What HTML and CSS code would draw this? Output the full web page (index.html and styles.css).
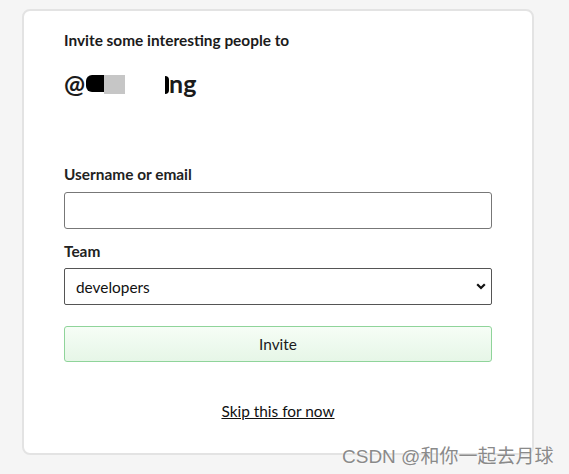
FILE: index.html
```html
<!DOCTYPE html>
<html>
<head>
<meta charset="utf-8">
<link rel="stylesheet" href="styles.css">
</head>
<body>
<div class="page">
  <div class="card">
    <h1 class="title">Invite some interesting people to</h1>
    <div class="handle">@<span class="redact-black"></span><span class="redact-gray"></span><span class="redact-gap"></span><span class="redact-half"></span>ng</div>
    <form class="form">
      <label class="label" for="user">Username or email</label>
      <input class="input" id="user" type="text">
      <label class="label team" for="team">Team</label>
      <div class="select">
        <span>developers</span>
        <svg class="chev" width="10" height="7" viewBox="0 0 10 7"><path d="M1.2 1.2 L5 5 L8.8 1.2" fill="none" stroke="#111" stroke-width="2.2"/></svg>
      </div>
      <button class="btn" type="button">Invite</button>
    </form>
    <div class="skip"><a href="#">Skip this for now</a></div>
  </div>
  <div class="watermark">CSDN @和你一起去月球</div>
</div>
</body>
</html>
```
FILE: styles.css
```css
html, body {
  margin: 0;
  padding: 0;
  background: #f5f5f5;
  font-family: "Lato", "Noto Sans", sans-serif;
  color: #1b1b1b;
}
.page {
  position: relative;
  width: 569px;
  height: 474px;
  padding: 9px 0 0 22px;
  box-sizing: border-box;
}
.card {
  width: 512px;
  height: 446px;
  box-sizing: border-box;
  background: #fff;
  border: 2px solid #e3e3e3;
  border-radius: 8px;
  padding: 19px 40px 0 40px;
}
.title {
  margin: 0;
  font-size: 15.4px;
  font-weight: 700;
  line-height: 20px;
}
.handle {
  margin-top: 19px;
  font-size: 25px;
  font-weight: 700;
  line-height: 28px;
  display: flex;
  align-items: center;
}
.redact-black {
  display: inline-block;
  width: 18px;
  height: 17px;
  background: #000;
  border-radius: 6px 0 0 6px;
  margin-left: 1px;
}
.redact-gray {
  display: inline-block;
  width: 21px;
  height: 19px;
  background: #c6c6c6;
  margin-top: 3px;
}
.redact-gap {
  display: inline-block;
  width: 40px;
}
.redact-half {
  display: inline-block;
  width: 4px;
  height: 18px;
  background: #000;
  border-radius: 0 6px 6px 0;
  margin-top: 4px;
}
.form {
  margin-top: 67px;
  display: flex;
  flex-direction: column;
}
.label {
  font-size: 15.4px;
  font-weight: 700;
  line-height: 20px;
  color: #222;
}
.input {
  margin-top: 8px;
  height: 37px;
  box-sizing: border-box;
  border: 1px solid #777;
  border-radius: 3px;
  outline: none;
}
.team {
  margin-top: 12px;
}
.select {
  margin-top: 7px;
  height: 37px;
  box-sizing: border-box;
  border: 1px solid #555;
  border-radius: 2px;
  display: flex;
  align-items: center;
  justify-content: space-between;
  padding: 0 4px 0 11px;
  font-size: 15.4px;
  color: #111;
}
.chev {
  margin-right: 1px;
}
.btn {
  margin-top: 21px;
  height: 36px;
  border: 1px solid #8fd49a;
  border-radius: 3px;
  background: linear-gradient(#f6fdf6, #e6f6e7);
  font-family: inherit;
  font-size: 15.4px;
  color: #1b1b1b;
}
.skip {
  margin-top: 40px;
  text-align: center;
  font-size: 15.4px;
}
.skip a {
  color: #111;
  text-decoration: underline;
}
.watermark {
  position: absolute;
  left: 342px;
  top: 441px;
  font-family: "Liberation Sans", "Noto Sans CJK SC", sans-serif;
  font-size: 19px;
  color: #8a8a8a;
  text-shadow: 0 0 2px #fff;
}
```
